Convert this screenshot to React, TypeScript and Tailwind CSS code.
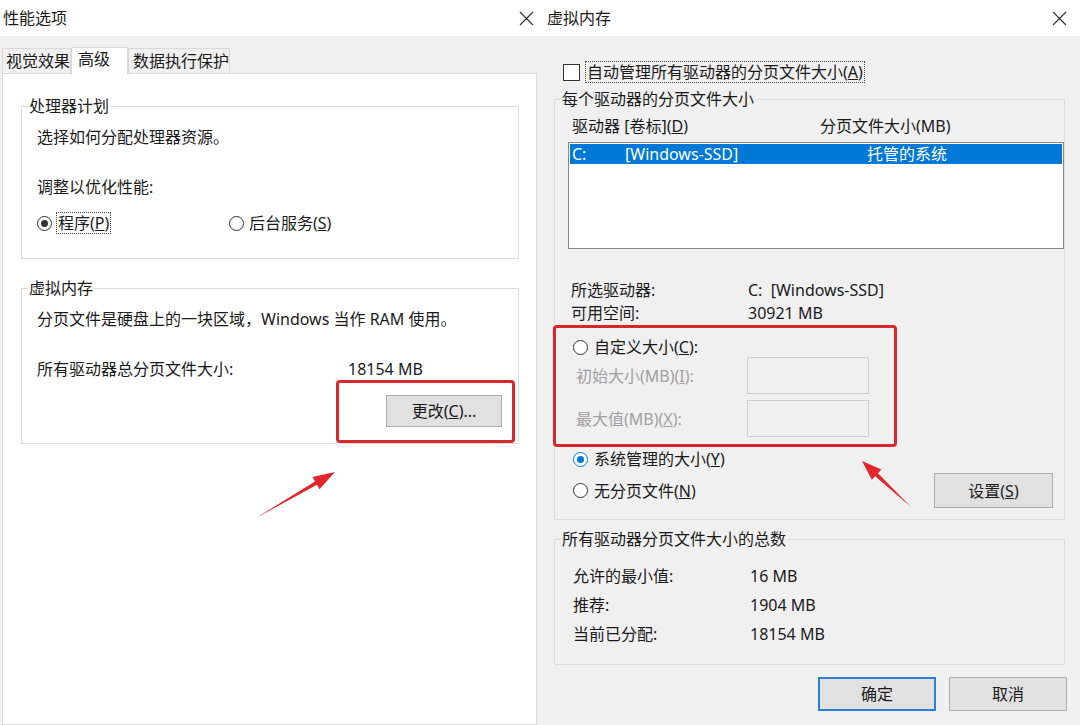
import React from "react";

function CloseIcon() {
  return (
    <svg width="15" height="15" viewBox="0 0 15 15" className="text-[#333]">
      <path d="M1 1 L14 14 M14 1 L1 14" stroke="currentColor" strokeWidth="1.2" />
    </svg>
  );
}

function Radio({ checked = false, blue = false }: { checked?: boolean; blue?: boolean }) {
  const ring = checked && blue ? "border-[#0078d7]" : "border-[#333]";
  const dot = blue ? "bg-[#0078d7]" : "bg-[#333]";
  return (
    <span className={`flex h-[15px] w-[15px] shrink-0 items-center justify-center rounded-full border bg-white ${ring}`}>
      {checked && <span className={`h-[7px] w-[7px] rounded-full ${dot}`} />}
    </span>
  );
}

function Arrows() {
  return (
    <svg className="pointer-events-none absolute inset-0" width="1080" height="725">
      <polygon
        points="256,518 317,484.8 319.5,489.2 335,472 312.5,477.1 315,481.4"
        fill="#e3262b"
      />
      <polygon
        points="911,507 878,473.2 881.4,469.6 862,461 871.8,479.8 875.2,476.2"
        fill="#e3262b"
      />
    </svg>
  );
}

export default function App() {
  return (
    <div className="relative flex h-[725px] w-[1080px] overflow-hidden bg-white font-['Noto_Sans','Noto_Sans_CJK_SC',sans-serif] text-[16px] leading-5 text-[#1a1a1a]">
      {/* 性能选项 */}
      <div className="flex w-[537px] flex-col">
        <div className="flex h-[36px] shrink-0 items-center justify-between bg-white pl-[3px] pr-[3px]">
          <span>性能选项</span>
          <CloseIcon />
        </div>
        <div className="flex flex-1 flex-col bg-[#f0f0f0]">
          <div className="flex h-[37px] shrink-0 items-end pl-[2px]">
            <div className="flex h-[25px] w-[69px] items-center border border-b-0 border-[#d9d9d9] bg-[#f0f0f0] pl-[3px]">
              视觉效果
            </div>
            <div className="relative top-px z-10 flex h-[27px] w-[57px] items-start border border-b-0 border-[#d9d9d9] bg-white pl-[6px] pt-px">
              高级
            </div>
            <div className="flex h-[25px] w-[102px] items-center border border-b-0 border-[#d9d9d9] bg-[#f0f0f0] pl-[4px]">
              数据执行保护
            </div>
          </div>
          <div className="ml-[2px] flex-1 border border-[#d9d9d9] bg-white pl-[18px] pr-[17px] pt-[22px]">
            <fieldset className="border border-[#dcdcdc]">
              <legend className="ml-[6px] px-px">处理器计划</legend>
              <div className="px-[15px] pb-[24px]">
                <div className="pt-[11px]">选择如何分配处理器资源。</div>
                <div className="mt-[30px]">调整以优化性能:</div>
                <div className="mt-[15px] flex items-center">
                  <div className="flex w-[192px] items-center">
                    <Radio checked />
                    <span className="ml-[4px] flex h-[22px] items-center border border-dotted border-[#444] px-px">
                      程序(<u>P</u>)
                    </span>
                  </div>
                  <div className="flex items-center">
                    <Radio />
                    <span className="ml-[5px]">
                      后台服务(<u>S</u>)
                    </span>
                  </div>
                </div>
              </div>
            </fieldset>

            <fieldset className="mt-[19px] border border-[#dcdcdc]">
              <legend className="ml-[6px] px-px">虚拟内存</legend>
              <div className="pb-[16px] pl-[15px] pr-[16px]">
                <div className="pt-[11px]">分页文件是硬盘上的一块区域，Windows 当作 RAM 使用。</div>
                <div className="mt-[30px] flex">
                  <span className="w-[311px]">所有驱动器总分页文件大小:</span>
                  <span>18154 MB</span>
                </div>
                <div className="mt-[16px] flex justify-end">
                  <button className="h-[32px] w-[116px] border border-[#adadad] bg-[#e1e1e1]">
                    更改(<u>C</u>)...
                  </button>
                </div>
              </div>
            </fieldset>
          </div>
        </div>
      </div>

      {/* 虚拟内存 */}
      <div className="flex flex-1 flex-col">
        <div className="flex h-[36px] shrink-0 items-center justify-between bg-white pl-[10px] pr-[13px]">
          <span>虚拟内存</span>
          <CloseIcon />
        </div>
        <div className="flex-1 bg-[#f0f0f0] pl-[17px] pr-[15px] pt-[25px]">
          <div className="ml-[9px] flex items-center">
            <span className="h-[17px] w-[17px] border border-[#333] bg-white" />
            <span className="ml-[5px] flex h-[22px] items-center border border-dotted border-[#444] px-px">
              自动管理所有驱动器的分页文件大小(<u>A</u>)
            </span>
          </div>

          <fieldset className="mt-[6px] border border-[#dcdcdc]">
            <legend className="ml-[6px] px-px">每个驱动器的分页文件大小</legend>
            <div className="pb-[11px] pr-[11px]">
              <div className="flex pl-[17px] pt-[7px]">
                <span className="w-[248px]">
                  驱动器 [卷标](<u>D</u>)
                </span>
                <span>分页文件大小(MB)</span>
              </div>
              <div className="-mr-[11px] ml-[13px] mt-[6px] h-[107px] border border-[#828790] bg-white p-px">
                <div className="flex h-[20px] items-center bg-[#0078d7] text-white">
                  <span className="w-[55px] pl-[2px]">C:</span>
                  <span className="w-[242px]">[Windows-SSD]</span>
                  <span>托管的系统</span>
                </div>
              </div>

              <div className="mt-[29px] pl-[16px]">
                <div className="flex h-[23px] items-center">
                  <span className="w-[177px]">所选驱动器:</span>
                  <span>C:&nbsp; [Windows-SSD]</span>
                </div>
                <div className="flex h-[23px] items-center">
                  <span className="w-[177px]">可用空间:</span>
                  <span>30921 MB</span>
                </div>

                <div className="mt-[13px] flex h-[20px] items-center pl-[2px]">
                  <Radio />
                  <span className="ml-[6px]">
                    自定义大小(<u>C</u>):
                  </span>
                </div>
                <div className="flex h-[37px] items-center pl-[5px] text-[#a0a0a0]">
                  <span className="w-[171px]">
                    初始大小(MB)(<u>I</u>):
                  </span>
                  <span className="h-[37px] w-[122px] border border-[#cfcfcf] bg-[#f0f0f0]" />
                </div>
                <div className="mt-[6px] flex h-[37px] items-center pl-[5px] text-[#a0a0a0]">
                  <span className="w-[171px]">
                    最大值(MB)(<u>X</u>):
                  </span>
                  <span className="h-[37px] w-[122px] border border-[#cfcfcf] bg-[#f0f0f0]" />
                </div>

                <div className="mt-[12px] flex h-[20px] items-center pl-[2px]">
                  <Radio checked blue />
                  <span className="ml-[6px]">
                    系统管理的大小(<u>Y</u>)
                  </span>
                </div>
                <div className="mt-[4px] flex items-center justify-between pl-[2px]">
                  <div className="flex items-center">
                    <Radio />
                    <span className="ml-[6px]">
                      无分页文件(<u>N</u>)
                    </span>
                  </div>
                  <button className="h-[35px] w-[119px] border border-[#adadad] bg-[#e1e1e1]">
                    设置(<u>S</u>)
                  </button>
                </div>
              </div>
            </div>
          </fieldset>

          <fieldset className="mt-[9px] border border-[#dcdcdc]">
            <legend className="ml-[6px] px-px">所有驱动器分页文件大小的总数</legend>
            <div className="pb-[16px] pl-[18px] pt-[12px]">
              <div className="flex h-[29px] items-center">
                <span className="w-[177px]">允许的最小值:</span>
                <span>16 MB</span>
              </div>
              <div className="flex h-[29px] items-center">
                <span className="w-[177px]">推荐:</span>
                <span>1904 MB</span>
              </div>
              <div className="flex h-[29px] items-center">
                <span className="w-[177px]">当前已分配:</span>
                <span>18154 MB</span>
              </div>
            </div>
          </fieldset>

          <div className="-mr-[2px] mt-[12px] flex justify-end gap-[13px]">
            <button className="h-[34px] w-[118px] border-2 border-[#2b80d6] bg-[#e1e1e1]">确定</button>
            <button className="h-[34px] w-[118px] border border-[#adadad] bg-[#e1e1e1]">取消</button>
          </div>
        </div>
      </div>

      {/* annotations */}
      <div className="pointer-events-none absolute left-[336px] top-[380px] h-[63px] w-[179px] rounded-[4px] border-[3px] border-[#d9272b]" />
      <div className="pointer-events-none absolute left-[553px] top-[325px] h-[122px] w-[344px] rounded-[4px] border-[3px] border-[#d9272b]" />
      <Arrows />
    </div>
  );
}
